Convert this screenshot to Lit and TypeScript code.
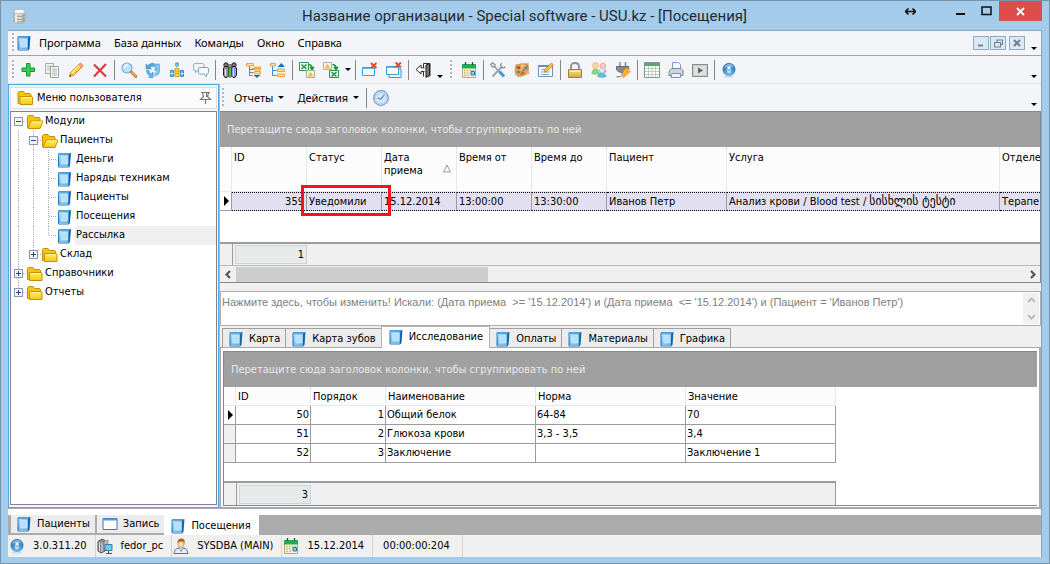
import { LitElement, html, css, svg, TemplateResult } from "lit";
import { customElement, state } from "lit/decorators.js";
import { classMap } from "lit/directives/class-map.js";

const shapes: Record<string, TemplateResult> = {
  db: svg`<path d="M3 3.500v9.500c0 3.300 11 3.300 11 0V3.500" fill="#dddcd8" stroke="#a3a29c" stroke-width=".7"/>
    <path d="M11 5v10q3-.5 3-2V4z" fill="#b9b8b2"/>
    <ellipse cx="8.500" cy="3.500" rx="5.500" ry="2.300" fill="#f6f6f4" stroke="#aaa9a3" stroke-width=".7"/>
    <path d="M3 6.500c1 2.600 10 2.600 11 0M3 9.500c1 2.600 10 2.600 11 0M3 12c1 2.600 10 2.600 11 0" fill="none" stroke="#8f8e88" stroke-width=".9"/><path d="M5 6.500v8" stroke="#fff" stroke-width="1.300"/>`,
  book: svg`<path d="M1.500 2.500Q1.500 1 3 1H14.500L13.500 14 12 15.500H2.500q-1 0-1-1z" fill="#2b78bd"/>
    <path d="M2.300 2.500h10v11.500h-9.500z" fill="url(#gBook)"/><path d="M12.300 2.500 14 1.500 13 14l-1 1z" fill="#155a9f"/>
    <path d="M4.800 4.500h6v7.500h-6z" fill="#b5e0f8" stroke="#cdebfb" stroke-width=".8"/><path d="M3 1.800h10.500" stroke="#74b9e8" stroke-width=".8"/><path d="M2.500 14.500h9" stroke="#9ccdf0" stroke-width=".8"/>`,
  folder: svg`<path d="M1 13.500V2.500L2 1.500h4.500L8 3.500h5l1 1v9z" fill="#f5c50f" stroke="#c98e05"/>
    <path d="M3 14.500V6.500h11.500l1 .8v7.200z" fill="url(#gFold)" stroke="#c98e05"/><path d="M4 7.500h10" stroke="#fff7a8"/>`,
  open: svg`<path d="M1 13.500V2.500L2 1.500h4.500L8 3.500h5l.5 1v9z" fill="#f5c50f" stroke="#c98e05"/>
    <path d="M1.500 14.500 4.500 7H16.500L13.500 14.500z" fill="url(#gFold)" stroke="#c98e05"/><path d="M5.300 8h10" stroke="#fff7a8"/>`,
  pin: svg`<path d="M4 2.500h9M5.500 3l1 3.500-3 3h10l-3-3 1-3.500M9.500 3v4M8.500 10v4" fill="none" stroke="#777" stroke-width="1.100"/>`,
  plus: svg`<path d="M6.500 1.500h3.500v4.500h4.500v3.500H10V14H6.500V9.500H2V6h4.500z" fill="#35cf56" stroke="#0d9a35"/>`,
  copy: svg`<path d="M1.500 1.500h8v10h-8z" fill="#f2f3f0" stroke="#a5aaa5"/><path d="M3 4h5M3 6h5M3 8h5" stroke="#b9bdb7"/>
    <path d="M6.500 4.500h8v11h-8z" fill="#fafaf7" stroke="#999f99"/><path d="M8 7h5M8 9h5M8 11h5M8 13h5" stroke="#aab0a9"/>`,
  pencil: svg`<path d="M1.500 14.500 2.800 10.500 11.500 1.800l3 2.700-8.800 8.800z" fill="#f8cd45" stroke="#cf8e18"/>
    <path d="m10.500 2.800 3 2.700 1.400-1.300q.5-.8-.3-1.500L13.300 1.400q-.8-.6-1.500.1z" fill="#f0a583" stroke="#cf7f40" stroke-width=".6"/>
    <path d="m4 11 7.500-7.500" stroke="#fff0a6" stroke-width="1.200"/><path d="m1.200 14.800.7-2 1.500 1.300z" fill="#444"/>`,
  cross: svg`<path d="M2 2.500 14 14.500M14 2 2 14.500" fill="none" stroke="#dc3c41" stroke-width="2.200"/>`,
  find: svg`<path d="m10 9.500 5 5" stroke="#b97827" stroke-width="3" stroke-linecap="round"/><path d="m11 10 4 4" stroke="#edb765" stroke-width="1.200"/>
    <circle cx="6" cy="6" r="5" fill="#bfe3fa" stroke="#78aed6" stroke-width="1.200"/><path d="M3 6q.5-3 3.500-3" fill="none" stroke="#fff" stroke-width="1.500"/>`,
  refresh: svg`<path d="M1 7V2l1.800 1.500Q5.500.8 9 1.500l.5 3Q7 3.500 5 5.500L6.500 7z" fill="#4fa6e2" stroke="#2e83c2" stroke-width=".5"/>
    <path d="M10 2h4.500v8Q14 12.500 12 13.500L10.500 11q1.500-1 1.300-3.500L10 9z" fill="#7cc6f1" stroke="#3b8fcd" stroke-width=".5"/>
    <path d="M1.500 8.500H4q0 2.500 2.500 3.300L8 10v5.500H3.500L5 13.800Q1.500 12.500 1.500 8.500z" fill="#62b4ea" stroke="#2e83c2" stroke-width=".5"/><path d="M8.500 10v5l3.500-1-1.500-2.500z" fill="#8fd2f6"/>`,
  chart: svg`<path d="M1.500 8.500h3v6h-3zM11.500 8.500h3v6h-3z" fill="#6db9ee" stroke="#3b8dc9"/><path d="M1.500 11.500h3M11.500 11.500h3" stroke="#fff"/>
    <path d="M6 6.500h4v8H6z" fill="#ffe05a" stroke="#d59c14"/><path d="M6 9h4M6 11.500h4" stroke="#d59c14"/><path d="M8 0v5M6 3l2 2 2-2M6 1l4 1.500M10 1 6 2.500" fill="none" stroke="#4ba0df"/>`,
  chat: svg`<path d="M2 1.500h7.500q1.500 0 1.500 1.500v4q0 1.500-1.500 1.500H5l-2.500 2v-2H2Q.5 8.500.5 7V3Q.5 1.500 2 1.500z" fill="#eef5fb" stroke="#8db1d0"/>
    <path d="M7 5.500h7q1.500 0 1.500 1.500v3.500q0 1.500-1.500 1.500h-.5v3L11 12H7q-1.500 0-1.500-1.500V7Q5.500 5.500 7 5.500z" fill="#f3f9fd" stroke="#7ea6c9"/>`,
  bino: svg`<circle cx="4" cy="3" r="2.200" fill="#777" stroke="#222"/><circle cx="12" cy="3" r="2.200" fill="#777" stroke="#222"/><circle cx="8" cy="4" r="1.500" fill="#aaa" stroke="#333" stroke-width=".7"/>
    <path d="M1.500 6 3 4.500h2.500l1 1.500v8L5 15.500H3L1.500 13z" fill="#8a8a8a" stroke="#222"/><path d="M9.500 6l1-1.500H13L14.500 6v7L13 15.500h-2L9.500 14z" fill="#8d93e8" stroke="#222"/>
    <path d="M6.500 6h3v8.500l-1.500 1-1.500-1z" fill="#52c13f" stroke="#2b4a26" stroke-width=".6"/><path d="M3.500 7v7" stroke="#e5e5e5" stroke-width="1.300"/><path d="M11.500 7v7" stroke="#d5d8ff" stroke-width="1"/>`,
  treeDown: svg`<path d="M.5 1.500h7v2.500h-7zM5.500 6.500h9M8.500 5h6v3h-6zM8.500 9.500h6v2.500h-6z" fill="#ffdfa6" stroke="#eaa33d"/><path d="M3.500 4.500v9h3M3.500 7.500h4M3.500 10.500h4" fill="none" stroke="#3d8bd0"/><path d="M7.500 13h7l-3.500 3z" fill="#1673c8"/>`,
  treeUp: svg`<path d="M.5 1.500h5v2.500h-5z" fill="#ffdfa6" stroke="#eaa33d"/><path d="M2.500 4.500v9h4M2.500 8.500h4" fill="none" stroke="#3d8bd0"/><path d="M7.500 7h7v2.500h-7zM7.500 12h7v2.500h-7z" fill="#ffdfa6" stroke="#eaa33d"/><path d="M7.500 5H15l-3.700-4z" fill="#1673c8"/>`,
  xlsTo: svg`<path d="M.5.500h9v8h-9z" fill="#f2faf1" stroke="#2d9748"/><path d="m2.500 2.500 5 4.500m0-4.500-5 4.500" stroke="#23933f" stroke-width="1.500"/>
    <path d="M9.500 2.500q4 .5 3.500 4m-2-1.500 2 2.500 2-2.500" fill="none" stroke="#159a36" stroke-width="1.600"/><path d="M7.500 8.500h8v7h-8z" fill="#fdf7e4" stroke="#a9a69c"/><path d="m11.500 9.500 3 5h-6z" fill="#f3bb3b"/>`,
  xlsFrom: svg`<path d="M.5.500h8v7h-8z" fill="#fdf7e4" stroke="#b5b0a3"/><path d="m4.500 1.500 3 5h-6z" fill="#f3bb3b"/>
    <path d="M9.500 2.500q4 .5 3.500 4m-2-1.500 2 2.500 2-2.500" fill="none" stroke="#159a36" stroke-width="1.600"/><path d="M6.500 8.500h9v7h-9z" fill="#f2faf1" stroke="#2d9748"/><path d="m8.500 10 5 4.500m0-4.500-5 4.500" stroke="#23933f" stroke-width="1.500"/>`,
  closeOne: svg`<path d="M.5 5.500h12v8H.5z" fill="#fff" stroke="#3a9bdc"/><path d="M1 6h11" stroke="#3a9bdc" stroke-width="1.500"/><path d="m9 1 5.500 5m0-5L9 6" stroke="#d9532c" stroke-width="2"/>`,
  closeAll: svg`<path d="M3 13v2.500h12V7h-2" fill="none" stroke="#3a9bdc"/><path d="M.5 4.500h12v8H.5z" fill="#fff" stroke="#3a9bdc"/><path d="M1 5h11" stroke="#3a9bdc" stroke-width="1.500"/><path d="m9.500.500 5.500 5m0-5-5.500 5" stroke="#d9532c" stroke-width="2"/>`,
  exit: svg`<path d="M8.500 14.500V1.500h6.500v12.500h-3" fill="#f5f5f5" stroke="#333"/><path d="m11 3 3.500-1.500V13L11 15.500z" fill="#777" stroke="#222"/><path d="M9.500 5.800H6V3L1 7.500 6 12V9.500h3.500" fill="#fff" stroke="#333"/>`,
  cal: svg`<path d="M1.500 3.500h13v12h-13z" fill="#fdf6df" stroke="#b3a686"/><path d="M1 2h14v4.500H1z" fill="#1fae4e"/><path d="M4.500 0v3M11.500 0v3" stroke="#444" stroke-width="1.300"/>
    <path d="M3 8.500h10M3 11h6M3 13.500h6" stroke="#d8b46a" stroke-width="1.300" stroke-dasharray="1.800 1"/><path d="M10 9.500h3.500v3.500H10z" fill="#8fd0f5" stroke="#1e78c0"/>`,
  tools: svg`<path d="M4 4l9.500 10.500" stroke="#8d969f" stroke-width="1.500"/><path d="m9.500 9.500 4.500 5" stroke="#3f9bdd" stroke-width="3"/><path d="M12 4.500 2.500 14.500" stroke="#9aa6b0" stroke-width="2"/><path d="m11.500 1-1 2.500 2 2.500 3-1M.8 2.500 2.500.8l2.500 2-.5 2-2 .3z" fill="none" stroke="#8b97a2" stroke-width="1.400"/>`,
  palette: svg`<path d="M1 2.500 14.500.5 15.500 12 4 15.500.500 12z" fill="#e1bb8b"/><path d="M2 3.500q5-3 11-1 3 4-.5 7.500-1 3-4.500 4-6 .5-6.500-5z" fill="#dba566" stroke="#c08445" stroke-width=".6"/>
    <circle cx="4.500" cy="5.500" r="1.600" fill="#e0312c"/><circle cx="8.500" cy="3.800" r="1.500" fill="#f4d83a"/><circle cx="12" cy="6" r="1.500" fill="#3c8de0"/><circle cx="4.500" cy="10" r="1.500" fill="#35a847"/><circle cx="9" cy="11" r="1.600" fill="#e2662f"/><path d="m6 13 8-10" stroke="#a95f3e"/>`,
  note: svg`<path d="M.5 3.500h14v11H.5z" fill="#f7fafe" stroke="#6f93bf"/><path d="M.5 4h14" stroke="#5b8ccb" stroke-width="2"/><path d="M3 7.500h6M3 10h9M3 12.500h8" stroke="#8ea4be"/><path d="m6 10 1-3 6.500-6 2 2L9 9.500z" fill="#f6c33f" stroke="#b97b20" stroke-width=".7"/>`,
  lock: svg`<path d="M4 8V4.500Q4 1 8 1t4 3.500V8" fill="none" stroke="#8b8f94" stroke-width="1.800"/><path d="M1.500 7.500h13v8h-13z" fill="url(#gLock)" stroke="#a68331"/><path d="M3 9.500h10" stroke="#fff1b5"/>`,
  users: svg`<circle cx="4.500" cy="3.500" r="2.900" fill="#fbd9a8" stroke="#ec9a56" stroke-width=".6"/><circle cx="12" cy="4" r="2.900" fill="#fcd0c4" stroke="#e98d80" stroke-width=".6"/><path d="M8.500 9q.5-2.500 3.500-2.500T15.500 10l-3 1.500z" fill="#f0908a"/><path d="M.5 12q0-5.500 4-5.500 4 0 4 5.500-4 1.500-8 0z" fill="#8fd27a"/>
    <circle cx="11" cy="8.500" r="2.700" fill="#d9eff7" stroke="#75b7d6" stroke-width=".6"/><path d="M6.500 15q-.5-4 4-4.300 5 .3 5 4.300-4 1.500-9 0z" fill="#63b8dd"/>`,
  plug: svg`<path d="M5 0v5M10.500 0v5" stroke="#888" stroke-width="1.500"/><path d="M1.500 4.500h12v3q-1 3-5.500 3.200-5.500-.5-6.500-3.200z" fill="#85898e" stroke="#666a6f"/><path d="M7.500 10.500v3q-3 2-6 1" fill="none" stroke="#999" stroke-width="1.500"/><path d="m10.500 6.500-4 5.500h3L8 16l7.500-6.500h-3.500l3-3z" fill="#fbb423" stroke="#e6811d" stroke-width=".6"/>`,
  sheet: svg`<path d="M.5.500h15v15H.5z" fill="#fff" stroke="#7d9983"/><path d="M1 1h14v3H1z" fill="#5fa36f"/><path d="M4.500 4v11M8 4v11M11.500 4v11M1 6.500h14M1 9.500h14M1 12.500h14" stroke="#b6c8b9" stroke-width=".9"/>`,
  printer: svg`<path d="M4.500.500h6l2 2v5h-8z" fill="#f4f9fe" stroke="#779cc6"/><path d="M1.500 8.500 3.500 6.500h9.500l2 2v5H.8z" fill="#ccd5dd" stroke="#7c8793"/><path d="M4 11.500h8.500v4H3z" fill="#e9f4fd" stroke="#6e96c0"/>`,
  play: svg`<path d="M.5 2.500h15v12H.5z" fill="#cbd0cd" stroke="#858d89"/><path d="M2 4h12v9H2z" fill="#dde1de"/><path d="M6 5.500v6l5-3z" fill="#5b6560"/>`,
  info: svg`<ellipse cx="8" cy="14.500" rx="5" ry="1.200" fill="#d3dce4"/><circle cx="8" cy="7.500" r="6.500" fill="url(#gBall)"/><path d="M3 6q1-4 5-4.300Q12 2 13 5.500 8 4 3 6z" fill="#9fd1f5" opacity=".7"/><path d="M6.500 4.500h3v6h-3z" fill="#fff"/><path d="M7.500 7h1v2.500h-1z" fill="#3076ba"/>`,
  clock: svg`<circle cx="8" cy="8" r="7.300" fill="#e8f3fd" stroke="#6f9dca" stroke-width="1.300"/><circle cx="8" cy="8" r="5.500" fill="#d5e8fa" stroke="#a9cbea"/><path d="m4.500 8 3.500 1L11.500 4.500" fill="none" stroke="#5b7fa8" stroke-width="1.100"/>`,
  win: svg`<path d="M1 2.500h14v11H1z" fill="#fff" stroke="#3a79b8"/><path d="M1 3.500h14" stroke="#4d9be2" stroke-width="2"/>`,
  server: svg`<path d="M1 3.500 5 1l3 1.500V13l-4 2-3-2z" fill="#8c8f90" stroke="#555"/><path d="M2.500 4v9M5 5v9" stroke="#ddd"/><path d="M7 3.500 11 2v9H7z" fill="#b9bcbd" stroke="#777" stroke-width=".6"/><path d="M8 6.500h7v6H8z" fill="#6fcdf2" stroke="#357ea8"/><path d="M9 15.500h6M11.500 13v2" stroke="#555"/>`,
  person: svg`<path d="M1 15.500Q1.500 10.500 6 10h4q4.500.5 5 5.500z" fill="#e8edf6" stroke="#5570a4"/><path d="M5 5q0-3 3-3t3 3q0 5-3 5T5 5z" fill="#fcd6ad" stroke="#bb7a3c" stroke-width=".7"/><path d="M4.500 5.500Q4 .5 8.500.5q4 0 3 5L10 3.500q-3 .5-4 0z" fill="#b5651d"/><path d="m6.500 10.500 1.500 3 1.500-3" fill="#fff" stroke="#5570a4" stroke-width=".7"/>`,
};

type Tool = [string, string] | "|" | "more" | "grip";

const tools: Tool[] = [
  ["plus", "Добавить"], ["copy", "Копировать"], ["pencil", "Изменить"], ["cross", "Удалить"], "|",
  ["find", "Поиск"], ["refresh", "Обновить"], ["chart", "Статистика"], ["chat", "Сообщения"], "|",
  ["bino", "Найти"], ["treeDown", "Развернуть"], ["treeUp", "Свернуть"], "|",
  ["xlsTo", "Экспорт"], ["xlsFrom", "Импорт"], "more", "|",
  ["closeOne", "Закрыть окно"], ["closeAll", "Закрыть все"], "|", ["exit", "Выход"], "more", "grip",
  ["cal", "Календарь"], "|", ["tools", "Настройки"], ["palette", "Оформление"], ["note", "Заметка"], "|",
  ["lock", "Блокировка"], ["users", "Пользователи"], ["plug", "Подключение"], "|",
  ["sheet", "Таблица"], ["printer", "Печать"], ["play", "Видео"], "|", ["info", "О программе"],
];

interface Node { level: number; icon: string; text: string; box?: string; rails: number; last?: boolean; selected?: boolean }
const tree: Node[] = [
  { level: 0, icon: "open", text: "Модули", box: "−", rails: 0 },
  { level: 1, icon: "open", text: "Пациенты", box: "−", rails: 1 },
  { level: 2, icon: "book", text: "Деньги", rails: 2 },
  { level: 2, icon: "book", text: "Наряды техникам", rails: 2 },
  { level: 2, icon: "book", text: "Пациенты", rails: 2 },
  { level: 2, icon: "book", text: "Посещения", rails: 2 },
  { level: 2, icon: "book", text: "Рассылка", rails: 2, last: true, selected: true },
  { level: 1, icon: "folder", text: "Склад", box: "+", rails: 1, last: true },
  { level: 0, icon: "folder", text: "Справочники", box: "+", rails: 0 },
  { level: 0, icon: "folder", text: "Отчеты", box: "+", rails: 0, last: true },
];

const analyses = [
  ["50", "1", "Общий белок", "64-84", "70"],
  ["51", "2", "Глюкоза крови", "3,3 - 3,5", "3,4"],
  ["52", "3", "Заключение", "", "Заключение 1"],
];
const pages = ["Карта", "Карта зубов", "Исследование", "Оплаты", "Материалы", "Графика"];
const windows: [string, string][] = [["book", "Пациенты"], ["win", "Запись"], ["book", "Посещения"]];
const status: [string, string][] = [["info", "3.0.311.20"], ["server", "fedor_pc"], ["person", "SYSDBA (MAIN)"], ["cal", "15.12.2014"], ["", "00:00:00:204"]];
const hint = "Перетащите сюда заголовок колонки, чтобы сгруппировать по ней";

@customElement("app-root")
export class AppRoot extends LitElement {
  @state() private page = 2;
  @state() private win = 2;

  static styles = css`
    :host { display: block; font: 11px/14px "DejaVu Sans Condensed", "DejaVu Sans", sans-serif; color: #000; }
    * { box-sizing: border-box; }
    button { font: inherit; color: inherit; border: 0; background: none; padding: 0; margin: 0; }
    svg { display: block; }
    .defs { width: 0; height: 0; position: absolute; }
    .i { width: 16px; height: 16px; flex: none; }
    .frame { min-height: 100vh; display: flex; flex-direction: column; background: #a4cbea; border: 1px solid #7594ad; padding: 0 7px 6px; }
    .title { display: flex; align-items: center; height: 29px; flex: none; padding-left: 3px; }
    .title h1 { flex: 1; margin: 0; padding-right: 18px; text-align: center; font: 15px/30px Roboto, "Open Sans", sans-serif; color: #222b33; white-space: nowrap; }
    .wins { display: flex; align-items: flex-start; align-self: stretch; width: 144px; flex: none; justify-content: flex-end; margin-left: -142px; }
    .wins button { width: 27px; height: 20px; display: grid; place-items: center; }
    .wins .resize { margin-right: 24px; }
    .wins .close { width: 45px; background: #e04b4b; }
    .body { flex: 1; display: flex; flex-direction: column; border: 1px solid #86a5be; border-width: 1px 1px 0 0; background: #f4f5f8; min-width: 0; }
    .grip { width: 2px; height: 20px; margin: 0 5px; flex: none; background: linear-gradient(#b3b5b9 50%, transparent 0) 0 0 / 2px 4px; }
    .menu > .grip, .tools > .grip:first-child { margin: 0 2px 0 4px; }
    .menu { display: flex; align-items: center; height: 25px; flex: none; border-bottom: 1px solid #a2a2a2; font: 11px/16px "Noto Sans", sans-serif; padding-right: 2px; }
    .menu nav { display: flex; gap: 13px; margin-left: 7px; flex: 1; }
    .mdi { display: flex; gap: 1px; margin-right: 4px; }
    .mdi button { width: 16px; height: 14px; border: 1px solid #93abbf; background: #dbe8f3; display: grid; place-items: center; }
    .mdi button:last-child { margin-left: 2px; }
    .more { width: 10px; align-self: flex-end; height: 10px; flex: none; display: grid; place-items: center; margin-bottom: 2px; }
    .more::before, .drop::after { content: ""; border: 3px solid transparent; border-top-color: #000; border-bottom: 0; }
    .more.mid { align-self: center; margin-bottom: 0; }
    .tools { display: flex; align-items: center; height: 28px; flex: none; padding-right: 2px; border-bottom: 1px solid #e2e4e8; }
    .tools .end, .bar .end { margin-left: auto; }
    .tool { width: 24px; height: 24px; display: grid; place-items: center; flex: none; }
    .sep { width: 5px; height: 20px; flex: none; background: linear-gradient(#858585, #858585) 2px 0 / 1px 100% no-repeat; }
    .work { flex: 1; display: flex; min-height: 0; background: #f0f0f0; }
    .side { width: 211px; flex: none; border: 1px solid #4fa9e6; padding: 2px 1px; display: flex; flex-direction: column; background: #f4f5f8; }
    .side header { display: flex; align-items: center; gap: 4px; height: 22px; padding: 0 3px 0 6px; background: #fcfcfc; border: 1px solid #dcdfe3; flex: none; }
    .side h2 { font: inherit; margin: 0; flex: 1; }
    .tree { margin: 2px 0 0; padding: 0; flex: 1; border: 1px solid #7d8390; background: #fff; list-style: none; }
    .node { display: flex; height: 19px; align-items: center; }
    .rail, .joint { width: 15px; height: 19px; flex: none; position: relative; background: linear-gradient(#b0b0b0 50%, transparent 0) 7px 0 / 1px 2px repeat-y; }
    .node .i { width: 17px; }
    .joint.root0 { background-position: 7px 9px; background-repeat: no-repeat; background-size: 1px 10px; }
    .joint::after { content: ""; position: absolute; left: 8px; right: 0; top: 9px; height: 1px; background: repeating-linear-gradient(90deg, #b0b0b0 0 1px, transparent 1px 2px); }
    .last { height: 10px; align-self: flex-start; }
    .box { position: absolute; z-index: 1; left: 3px; top: 5px; width: 9px; height: 9px; background: #f2f4f8; border: 1px solid #8f98a5; }
    .box::before, .box.p::after { content: ""; position: absolute; left: 1px; top: 3px; width: 5px; height: 1px; background: #264a8c; }
    .box.p::after { left: 3px; top: 1px; width: 1px; height: 5px; }
    .leafj + .i { margin-right: 2px; }
    .label { padding-left: 2px; flex: 1; height: 19px; line-height: 18px; white-space: nowrap; overflow: hidden; }
    .leafj ~ .label { padding-left: 1px; }
    .on { background: #efefef; }
    .main { flex: 1; min-width: 0; display: flex; flex-direction: column; border-left: 1px solid #b5babf; }
    .bar { display: flex; align-items: center; height: 27px; flex: none; background: #f4f5f8; padding-right: 2px; font: 11px/16px "Noto Sans", sans-serif; }
    .bar .grip { margin: 0 10px 0 2px; }
    .drop { display: flex; align-items: center; gap: 5px; margin-right: 13px; }
    .bar .drop:nth-of-type(2) { margin-right: 5px; }
    .grid { border: 1px solid #818896; background: #fff; overflow: hidden; flex: none; }
    .hint { background: #a0a0a0; color: #e9e9e9; height: 35px; line-height: 36px; padding-left: 7px; white-space: nowrap; }
    table { table-layout: fixed; border-collapse: separate; border-spacing: 0; width: 100%; }
    th { font-weight: 400; text-align: left; vertical-align: top; background: #fcfcfc; border-right: 1px solid #dfeaf3; border-bottom: 1px solid #dfeaf3; padding: 3px 0 0 2px; white-space: nowrap; overflow: hidden; }
    .visits th { height: 45px; line-height: 13px; padding-top: 4px; }
    .visits .wrap { white-space: normal; position: relative; }
    .visits th:last-child, .visits td:last-child { border-right: 0; }
    .sort { position: absolute; right: 5px; top: 17px; }
    td { height: 19px; padding: 0 1px; line-height: 16px; white-space: nowrap; border-right: 1px solid #9c9c9c; border-bottom: 1px solid #9c9c9c; overflow: hidden; }
    td.num { text-align: right; }
    .visits td:not(.ind) { background: #e2e0f0; border-bottom: 1px dotted #000; border-top: 1px dotted #000; padding-left: 2px; padding-right: 2px; }
    .visits td.mark { position: relative; overflow: visible; }
    .mark i { position: absolute; z-index: 2; inset: -8px -10px -6px -6px; border: 3px solid #f5131f; pointer-events: none; }
    .ind { padding: 0; }
    td.ind { background: #f0f0f0; padding: 0; }
    .cur::before { content: ""; display: block; width: 0; margin-left: 4px; border: 5px solid transparent; border-left-color: #000; border-right: 0; }
    td.cur { background: #fff; }
    .geo { font-size: 13px; line-height: 14px; }
    .foot { display: flex; height: 22px; border-top: 2px solid #9c9c9c; background: #f0f0f0; }
    .foot::before { content: ""; width: 12px; border-right: 1px solid #9c9c9c; flex: none; }
    .foot output { margin: 1px 0 1px 2px; width: 72px; height: 19px; border: 1px solid #cfd3d5; background: #e7eaea; text-align: right; line-height: 18px; padding-right: 2px; }
    .visitgrid { border-width: 1px 1px 1px 0; }
    .visitgrid .foot { height: 23px; margin-top: 31px; }
    .hscroll { display: flex; height: 17px; border-top: 1px solid #b9b9b9; background: #efefef; }
    .hscroll button { width: 16px; display: grid; place-items: center; flex: none; }
    .track { flex: 1; }
    .thumb { width: 32%; height: 15px; margin-top: 1px; background: #cdcdcd; }
    .filter { margin: 8px 0 1px; height: 35px; display: flex; border: 1px solid #abadb3; background: #fff; flex: none; }
    .filter textarea { flex: 1; font: 11px/14px "Liberation Sans", Arial, sans-serif; border: 0; resize: none; padding: 3px 1px; margin: 0; outline: 0; background: none; color: #808080; overflow: hidden; height: 33px; }
    .spin { display: flex; flex-direction: column; width: 16px; margin: 1px; background: #f0f0f0; }
    .spin button { flex: 1; display: grid; place-items: center; }
    .tabs { display: flex; align-items: flex-end; height: 20px; padding-left: 2px; flex: none; }
    .tabs button { display: flex; align-items: center; gap: 5px; height: 19px; padding: 2px 5px 0; background: #ececec; border: 1px solid #9f9fa0; border-bottom: 0; margin-right: -1px; white-space: nowrap; }
    .tabs button.act { height: 22px; margin-bottom: -1px; background: #fff; border-color: #b5b5b5; z-index: 1; padding: 0 6px 2px; }
    .pane { flex: 1; border: 1px solid #a9a9ad; border-right-width: 2px; background: #fff; padding: 3px 2px 1px; margin: 0; display: flex; flex-direction: column; }
    .pane .grid { border-right: 0; flex: 1; display: flex; flex-direction: column; }
    .pane .hint { flex: none; height: 35px; line-height: 36px; }
    .fit { width: 612px; max-width: 100%; flex: 1; display: flex; flex-direction: column; }
    .fit th { height: 19px; padding-top: 3px; line-height: 13px; }
    .fit .foot { margin-top: auto; height: 24px; border-right: 1px solid #9c9c9c; }
    .fit output { margin-top: 2px; }
    .gap { height: 7px; background: #fff; border-top: 1px solid #a9a9ad; flex: none; }
    .docs { display: flex; align-items: flex-start; height: 20px; background: #ababab; padding-left: 3px; flex: none; }
    .docs button { display: flex; align-items: center; gap: 5px; height: 18px; background: #ececec; padding: 0 5px; margin-right: 2px; }
    .docs button.act { height: 21px; background: #fff; padding: 2px 8px 0 6px; margin: -1px 0 0 -2px; }
    .status { display: flex; height: 22px; background: #f0f0f0; flex: none; }
    .status span { display: flex; align-items: center; gap: 8px; padding: 0 8px 0 1px; border-right: 1px solid #d5d5d5; white-space: nowrap; }
    .status span:nth-child(5) { padding-left: 10px; padding-right: 12px; }
  `;

  private icon(name: string) {
    return html`<svg class="i" viewBox="0 0 16 16" aria-hidden="true">${shapes[name]}</svg>`;
  }

  private tool(t: Tool, i: number) {
    if (t === "|") return html`<span class="sep"></span>`;
    if (t === "grip") return html`<span class="grip"></span>`;
    if (t === "more") return html`<button class=${classMap({ more: true, mid: i < 20 })} aria-label="Ещё"></button>`;
    return html`<button class="tool" aria-label=${t[1]}>${this.icon(t[0])}</button>`;
  }

  private node(n: Node, i: number) {
    const joint = { joint: true, root0: i === 0, leafj: n.level === 2, last: !!n.last };
    return html`<li class="node">
      ${Array.from({ length: n.rails }, () => html`<span class="rail"></span>`)}
      <span class=${classMap(joint)}>${n.box ? html`<i class=${classMap({ box: true, p: n.box === "+" })}></i>` : ""}</span>
      ${this.icon(n.icon)}
      <span class=${classMap({ label: true, on: !!n.selected })}>${n.text}</span>
    </li>`;
  }

  private chevron(d: string, color = "#505050") {
    return html`<svg width="9" height="9" viewBox="0 0 9 9"><path d=${d} fill="none" stroke=${color} stroke-width="2"/></svg>`;
  }

  render() {
    return html`
      <svg class="defs" aria-hidden="true"><defs>
        <linearGradient id="gBook" x1="0" y1="0" x2="1" y2="1"><stop offset="0" stop-color="#a3d8f6"/><stop offset="1" stop-color="#62b0e6"/></linearGradient>
        <linearGradient id="gFold" x1="0" y1="0" x2="0" y2="1"><stop offset="0" stop-color="#fff05a"/><stop offset="1" stop-color="#f7c51c"/></linearGradient>
        <linearGradient id="gLock" x1="0" y1="0" x2="0" y2="1"><stop offset="0" stop-color="#f6df91"/><stop offset="1" stop-color="#cfa743"/></linearGradient>
        <radialGradient id="gBall" cx=".5" cy=".8" r=".8"><stop offset="0" stop-color="#6fc6f7"/><stop offset="1" stop-color="#1c5ea5"/></radialGradient>
      </defs></svg>
      <div class="frame">
        <div class="title">
          ${this.icon("db")}
          <h1>Название организации - Special software - USU.kz - [Посещения]</h1>
          <div class="wins">
            <button class="resize" aria-label="Размер"><svg width="11" height="9" viewBox="0 0 11 9"><path d="M1 4.500h9M3.500 1.500l-3 3 3 3M7.500 1.500l3 3-3 3" fill="none" stroke="#111" stroke-width="1.600"/></svg></button>
            <button aria-label="Свернуть"><svg width="9" height="9"><path d="M0 7h9" stroke="#111" stroke-width="2"/></svg></button>
            <button aria-label="Развернуть"><svg width="11" height="10"><path d="M1 1h9v7.500H1z" fill="none" stroke="#111" stroke-width="1.500"/></svg></button>
            <button class="close" aria-label="Закрыть"><svg width="9" height="9"><path d="m1 1 7 7m0-7L1 8" stroke="#fff" stroke-width="1.800"/></svg></button>
          </div>
        </div>
        <div class="body">
          <div class="menu">
            <span class="grip"></span>${this.icon("book")}
            <nav>${["Программа", "База данных", "Команды", "Окно", "Справка"].map((m) => html`<button>${m}</button>`)}</nav>
            <div class="mdi">
              <button aria-label="Свернуть окно"><svg width="8" height="8"><path d="M1 6.500h5" stroke="#6b8299" stroke-width="2"/></svg></button>
              <button aria-label="Восстановить окно"><svg width="9" height="9"><path d="M3 3V1h5.500v4.500H6.500M.5 3.500h6v4.500h-6z" fill="none" stroke="#6b8299" stroke-width="1.200"/></svg></button>
              <button aria-label="Закрыть окно"><svg width="8" height="8"><path d="m1 1 6 6m0-6L1 7" stroke="#6b8299" stroke-width="2"/></svg></button>
            </div>
            <button class="more" aria-label="Ещё"></button>
          </div>
          <div class="tools"><span class="grip"></span>${tools.map((t, i) => this.tool(t, i))}<button class="more end" aria-label="Ещё"></button></div>
          <div class="work">
            <aside class="side">
              <header>${this.icon("folder")}<h2>Меню пользователя</h2>${this.icon("pin")}</header>
              <ul class="tree">${tree.map((n, i) => this.node(n, i))}</ul>
            </aside>
            <div class="main">
              <div class="bar">
                <span class="grip"></span>
                <button class="drop">Отчеты</button><button class="drop">Действия</button>
                <span class="sep"></span><button class="tool" aria-label="Время">${this.icon("clock")}</button>
                <button class="more end" aria-label="Ещё"></button>
              </div>
              <section class="grid visitgrid">
                <div class="hint">${hint}</div>
                <table class="visits">
                  <colgroup><col style="width:12px"><col style="width:75px"><col style="width:75px"><col style="width:75px"><col style="width:75px"><col style="width:75px"><col style="width:120px"><col><col style="width:40px"></colgroup>
                  <thead><tr><th class="ind"></th><th>ID</th><th>Статус</th>
                    <th class="wrap">Дата<br>приема<svg class="sort" width="8" height="9"><path d="M4 1 7.500 8H.5z" fill="none" stroke="#999"/></svg></th>
                    <th>Время от</th><th>Время до</th><th>Пациент</th><th>Услуга</th><th>Отделе</th></tr></thead>
                  <tbody><tr><td class="ind cur"></td><td class="num">359</td><td class="mark">Уведомили<i></i></td><td>15.12.2014</td>
                    <td>13:00:00</td><td>13:30:00</td><td>Иванов Петр</td><td>Анализ крови / Blood test / <span class="geo" lang="ka">სისხლის ტესტი</span></td><td>Терапе</td></tr></tbody>
                </table>
                <div class="foot"><output>1</output></div>
                <div class="hscroll"><button aria-label="Влево">${this.chevron("M6 1 2.500 4.500 6 8")}</button><div class="track"><div class="thumb"></div></div><button aria-label="Вправо">${this.chevron("M3 1l3.500 3.500L3 8")}</button></div>
              </section>
              <div class="filter">
                <textarea aria-label="Фильтр" readonly .value=${"Нажмите здесь, чтобы изменить! Искали: (Дата приема  >= '15.12.2014') и (Дата приема  <= '15.12.2014') и (Пациент = 'Иванов Петр')"}></textarea>
                <div class="spin"><button aria-label="Вверх">${this.chevron("M1 6l3.500-3.500L8 6", "#bbb")}</button><button aria-label="Вниз">${this.chevron("M1 3l3.500 3.500L8 3", "#bbb")}</button></div>
              </div>
              <div class="tabs" role="tablist">
                ${pages.map((p, i) => html`<button role="tab" aria-selected=${i === this.page ? "true" : "false"} class=${classMap({ act: i === this.page })} @click=${() => (this.page = i)}>${this.icon("book")}${p}</button>`)}
              </div>
              <section class="pane">
                <div class="grid">
                  <div class="hint">${hint}</div>
                  <div class="fit">
                    <table>
                      <colgroup><col style="width:12px"><col style="width:75px"><col style="width:75px"><col style="width:150px"><col style="width:150px"><col style="width:150px"></colgroup>
                      <thead><tr><th class="ind"></th><th>ID</th><th>Порядок</th><th>Наименование</th><th>Норма</th><th>Значение</th></tr></thead>
                      <tbody>${analyses.map((r, i) => html`<tr><td class=${classMap({ ind: true, cur: i === 0 })}></td>${r.map((c, k) => html`<td class=${k < 2 ? "num" : "txt"}>${c}</td>`)}</tr>`)}</tbody>
                    </table>
                    <div class="foot"><output>3</output></div>
                  </div>
                </div>
              </section>
            </div>
          </div>
          <div class="gap"></div>
          <div class="docs">${windows.map(([ic, t], i) => html`<button class=${classMap({ act: i === this.win })} @click=${() => (this.win = i)}>${this.icon(ic)}${t}</button>`)}</div>
          <footer class="status">${status.map(([ic, t]) => html`<span>${ic ? this.icon(ic) : ""}${t}</span>`)}</footer>
        </div>
      </div>`;
  }
}
